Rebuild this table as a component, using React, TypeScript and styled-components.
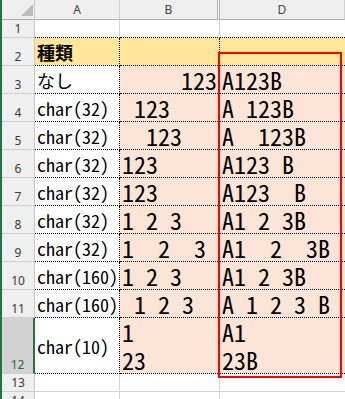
import React from "react";
import styled, { createGlobalStyle } from "styled-components";

const GlobalStyle = createGlobalStyle`
  html, body {
    margin: 0;
    padding: 0;
    background: #ffffff;
    overflow: hidden;
  }
`;

const fills = {
  none: "#ffffff",
  yellow: "#ffe699",
  peach: "#fce4d6"
};

const lines = {
  dot: "1px dotted #000000",
  grid: "1px solid #d4d4d4",
  none: "0"
};

type FillType = keyof typeof fills;
type LineType = keyof typeof lines;

const cellFont = `"Noto Sans Mono CJK JP", "Noto Sans CJK JP", "DejaVu Sans Mono", monospace`;

const Sheet = styled.div`
  position: relative;
  display: grid;
  grid-template-columns: 33px 85px 100px 1fr;
  width: 343px;
  height: 399px;
  border-left: 2px solid #217346;
  overflow: hidden;
`;

const Corner = styled.div`
  display: flex;
  align-items: flex-end;
  justify-content: flex-end;
  height: 20px;
  box-sizing: border-box;
  padding: 0 1px 3px 0;
  background: #efefef;
  border-right: 1px solid #c8c8c8;
  border-bottom: 1px solid #ababab;
`;

const ColHead = styled.div<{ $double?: boolean }>`
  display: flex;
  align-items: center;
  justify-content: center;
  height: 20px;
  box-sizing: border-box;
  background: #efefef;
  border-right: ${({ $double }) => ($double ? "3px double #b4b4b4" : "1px solid #d0d0d0")};
  border-bottom: 1px solid #ababab;
  font-family: "Noto Sans", "Open Sans", sans-serif;
  font-size: 12px;
  color: #444444;
`;

const RowHead = styled.div<{ $h: number; $active?: boolean }>`
  display: flex;
  align-items: flex-end;
  justify-content: center;
  height: ${({ $h }) => $h}px;
  box-sizing: border-box;
  padding-bottom: 1px;
  background: ${({ $active }) => ($active ? "#d2d2d2" : "#efefef")};
  border-right: ${({ $active }) => ($active ? "2px solid #217346" : "1px solid #c8c8c8")};
  border-bottom: 1px solid #d0d0d0;
  font-family: "Noto Sans", "Open Sans", sans-serif;
  font-size: 12px;
  line-height: 14px;
  color: ${({ $active }) => ($active ? "#217346" : "#3a3a3a")};
`;

const Cell = styled.div<{
  $h: number;
  $fill: FillType;
  $right: LineType;
  $bottom: LineType;
  $align?: "left" | "right";
  $big?: boolean;
  $bold?: boolean;
}>`
  display: flex;
  align-items: center;
  justify-content: ${({ $align }) => ($align === "right" ? "flex-end" : "flex-start")};
  height: ${({ $h }) => $h}px;
  min-width: 0;
  box-sizing: border-box;
  padding: 0 2px;
  background: ${({ $fill }) => fills[$fill]};
  border-right: ${({ $right }) => lines[$right]};
  border-bottom: ${({ $bottom }) => lines[$bottom]};
  font-family: ${cellFont};
  font-feature-settings: "hwid";
  font-size: ${({ $big }) => ($big ? "24px" : "18px")};
  font-weight: ${({ $bold }) => ($bold ? 700 : 400)};
  line-height: ${({ $big }) => ($big ? "28px" : "20px")};
  color: #000000;
  white-space: pre;
`;

const Callout = styled.div`
  position: absolute;
  left: 216px;
  top: 52px;
  width: 124px;
  height: 326px;
  box-sizing: border-box;
  border: 2px solid #ff0000;
  pointer-events: none;
`;

interface RowData {
  n: number;
  h: number;
  a?: string;
  b?: string;
  d?: string;
  kind: "blank" | "head" | "data" | "tail";
  bAlign?: "left" | "right";
}

const NB = "\u00a0";

const rows: RowData[] = [
  { n: 1, h: 18, kind: "blank" },
  { n: 2, h: 28, kind: "head", a: "種類" },
  { n: 3, h: 28, kind: "data", a: "なし", b: "123", bAlign: "right", d: "A123B" },
  { n: 4, h: 28, kind: "data", a: "char(32)", b: " 123", d: "A 123B" },
  { n: 5, h: 28, kind: "data", a: "char(32)", b: "  123", d: "A  123B" },
  { n: 6, h: 28, kind: "data", a: "char(32)", b: "123 ", d: "A123 B" },
  { n: 7, h: 28, kind: "data", a: "char(32)", b: "123  ", d: "A123  B" },
  { n: 8, h: 28, kind: "data", a: "char(32)", b: "1 2 3", d: "A1 2 3B" },
  { n: 9, h: 28, kind: "data", a: "char(32)", b: "1  2  3", d: "A1  2  3B" },
  { n: 10, h: 28, kind: "data", a: "char(160)", b: `1${NB}2${NB}3`, d: `A1${NB}2${NB}3B` },
  {
    n: 11,
    h: 28,
    kind: "data",
    a: "char(160)",
    b: `${NB}1${NB}2${NB}3${NB}`,
    d: `A${NB}1${NB}2${NB}3${NB}B`
  },
  { n: 12, h: 56, kind: "data", a: "char(10)", b: "1\n23", d: "A1\n23B" },
  { n: 13, h: 18, kind: "tail" },
  { n: 14, h: 18, kind: "tail" }
];

const SheetRow = ({ row }: { row: RowData }) => {
  const boxed = row.kind === "head" || row.kind === "data";
  const inner: LineType = boxed ? "dot" : "grid";
  const bottom: LineType = row.kind === "tail" ? "grid" : "dot";
  const fillA: FillType = row.kind === "head" ? "yellow" : "none";
  const fillBD: FillType =
    row.kind === "head" ? "yellow" : row.kind === "data" ? "peach" : "none";

  return (
    <>
      <RowHead $h={row.h} $active={row.n === 12}>
        {row.n}
      </RowHead>
      <Cell $h={row.h} $fill={fillA} $right={inner} $bottom={bottom} $bold={row.kind === "head"}>
        {row.a}
      </Cell>
      <Cell $h={row.h} $fill={fillBD} $right={inner} $bottom={bottom} $align={row.bAlign} $big>
        {row.b}
      </Cell>
      <Cell $h={row.h} $fill={fillBD} $right="none" $bottom={bottom} $big>
        {row.d}
      </Cell>
    </>
  );
};

const App = () => {
  return (
    <>
      <GlobalStyle />
      <Sheet>
        <Corner>
          <svg width="12" height="12" viewBox="0 0 12 12">
            <polygon points="0,12 12,12 12,0" fill="#bdbdbd" />
          </svg>
        </Corner>
        <ColHead>A</ColHead>
        <ColHead $double>B</ColHead>
        <ColHead>D</ColHead>
        {rows.map((row) => (
          <SheetRow key={row.n} row={row} />
        ))}
        <Callout />
      </Sheet>
    </>
  );
};

export default App;
